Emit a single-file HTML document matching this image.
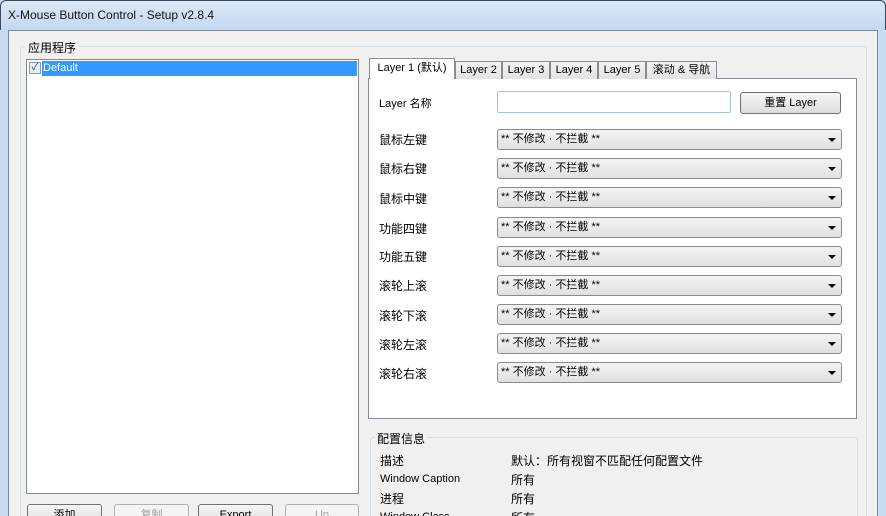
<!DOCTYPE html>
<html style="overflow:hidden;width:886px;height:516px"><head><meta charset="utf-8"><style>
*{box-sizing:border-box}
body{margin:0;width:886px;height:516px;overflow:hidden;background:#c9dcf2;font-family:"Liberation Sans","Noto Sans CJK SC",sans-serif;font-size:11px;color:#000;position:relative}
.abs{position:absolute}
.title{left:0;top:0;width:886px;height:30px;background:linear-gradient(180deg,#dbe8f7,#c3d8f0);border-radius:6px 6px 0 0;border:1px solid #3a4a5c;border-bottom:none}
.title span{position:absolute;left:7px;top:7px;font-size:12px;color:#111}
.client{left:8px;top:30px;width:870px;height:486px;background:#f0f0f0;border:1px solid #7a8a9a;border-bottom:none}
.grp{border:1px solid #d5dfe5;border-radius:3px}
.lbl{background:#f0f0f0;padding:0 2px;font-size:12px}
.dd{position:absolute;left:497px;width:345px;height:21px;border:1px solid #8a8a8a;border-radius:3px;background:linear-gradient(#f4f4f4,#e0e0e0);font-size:11px;padding:1px 3px;line-height:17px}
.dd:after{content:"";position:absolute;right:5px;top:8px;border:4px solid transparent;border-top:4px solid #000;border-bottom:none}
.row{position:absolute;left:379px;font-size:12px}
.btn{position:absolute;height:22px;border:1px solid #707070;border-radius:3px;background:linear-gradient(#f6f6f6,#dcdcdc);text-align:center;line-height:20px;font-size:11px}
.dis{border-color:#adb2b5;color:#a0a0a0;background:#f4f4f4}
.tab{position:absolute;top:61px;height:18px;border:1px solid #898c95;border-bottom:none;background:linear-gradient(#f3f3f3,#e3e3e3);line-height:17px;font-size:11px;text-align:center;white-space:nowrap;overflow:hidden}
</style></head><body>
<div class="abs title"><span>X-Mouse Button Control - Setup v2.8.4</span></div>
<div class="abs client"></div>
<div class="abs grp" style="left:20px;top:46px;width:847px;height:480px"></div>
<div class="abs lbl" style="left:26px;top:39px">应用程序</div>
<div class="abs" style="left:26px;top:59px;width:333px;height:435px;background:#fff;border:1px solid #828790"></div>
<div class="abs" style="left:42px;top:61px;width:315px;height:15px;background:#3399ff"></div>
<div class="abs" style="left:29px;top:62px;width:12px;height:12px;border:1px solid #8a9bb0;background:#e8eef6;font-size:10px;line-height:10px;color:#1a3a8a;text-align:center">✓</div>
<div class="abs" style="left:43px;top:62px;color:#fff">Default</div>
<div class="abs" style="left:368px;top:78px;width:489px;height:341px;background:#fff;border:1px solid #898c95"></div>
<div class="tab" style="left:369px;top:58px;width:86px;height:21px;background:#fff;line-height:19px">Layer 1 (默认)</div>
<div class="tab" style="left:455px;width:47px">Layer 2</div>
<div class="tab" style="left:502px;width:48px">Layer 3</div>
<div class="tab" style="left:550px;width:48px">Layer 4</div>
<div class="tab" style="left:598px;width:48px">Layer 5</div>
<div class="tab" style="left:646px;width:71px">滚动 &amp; 导航</div>
<div class="row" style="top:95px;font-size:11px">Layer 名称</div>
<div class="abs" style="left:497px;top:91px;width:234px;height:22px;border:1px solid #a5c3dd;background:#fff;border-radius:2px"></div>
<div class="btn" style="left:740px;top:92px;width:101px">重置 Layer</div>
<div class="row" style="top:131px">鼠标左键</div><div class="dd" style="top:129px">** 不修改 · 不拦截 **</div>
<div class="row" style="top:160px">鼠标右键</div><div class="dd" style="top:158px">** 不修改 · 不拦截 **</div>
<div class="row" style="top:190px">鼠标中键</div><div class="dd" style="top:187px">** 不修改 · 不拦截 **</div>
<div class="row" style="top:220px">功能四键</div><div class="dd" style="top:217px">** 不修改 · 不拦截 **</div>
<div class="row" style="top:248px">功能五键</div><div class="dd" style="top:246px">** 不修改 · 不拦截 **</div>
<div class="row" style="top:277px">滚轮上滚</div><div class="dd" style="top:275px">** 不修改 · 不拦截 **</div>
<div class="row" style="top:307px">滚轮下滚</div><div class="dd" style="top:304px">** 不修改 · 不拦截 **</div>
<div class="row" style="top:336px">滚轮左滚</div><div class="dd" style="top:333px">** 不修改 · 不拦截 **</div>
<div class="row" style="top:365px">滚轮右滚</div><div class="dd" style="top:362px">** 不修改 · 不拦截 **</div>
<div class="abs grp" style="left:370px;top:437px;width:488px;height:90px"></div>
<div class="abs lbl" style="left:375px;top:430px">配置信息</div>
<div class="abs" style="left:380px;top:452px;font-size:12px">描述</div><div class="abs" style="left:511px;top:452px;font-size:12px">默认：所有视窗不匹配任何配置文件</div>
<div class="abs" style="left:380px;top:473px;font-size:11px">Window Caption</div><div class="abs" style="left:511px;top:471px;font-size:12px">所有</div>
<div class="abs" style="left:380px;top:490px;font-size:12px">进程</div><div class="abs" style="left:511px;top:490px;font-size:12px">所有</div>
<div class="abs" style="left:380px;top:511px;font-size:11px">Window Class</div><div class="abs" style="left:511px;top:509px;font-size:12px">所有</div>
<div class="btn" style="left:27px;top:504px;width:75px">添加</div>
<div class="btn dis" style="left:114px;top:504px;width:75px">复制</div>
<div class="btn" style="left:198px;top:504px;width:75px">Export</div>
<div class="btn dis" style="left:285px;top:504px;width:74px">Up</div>
</body></html>
